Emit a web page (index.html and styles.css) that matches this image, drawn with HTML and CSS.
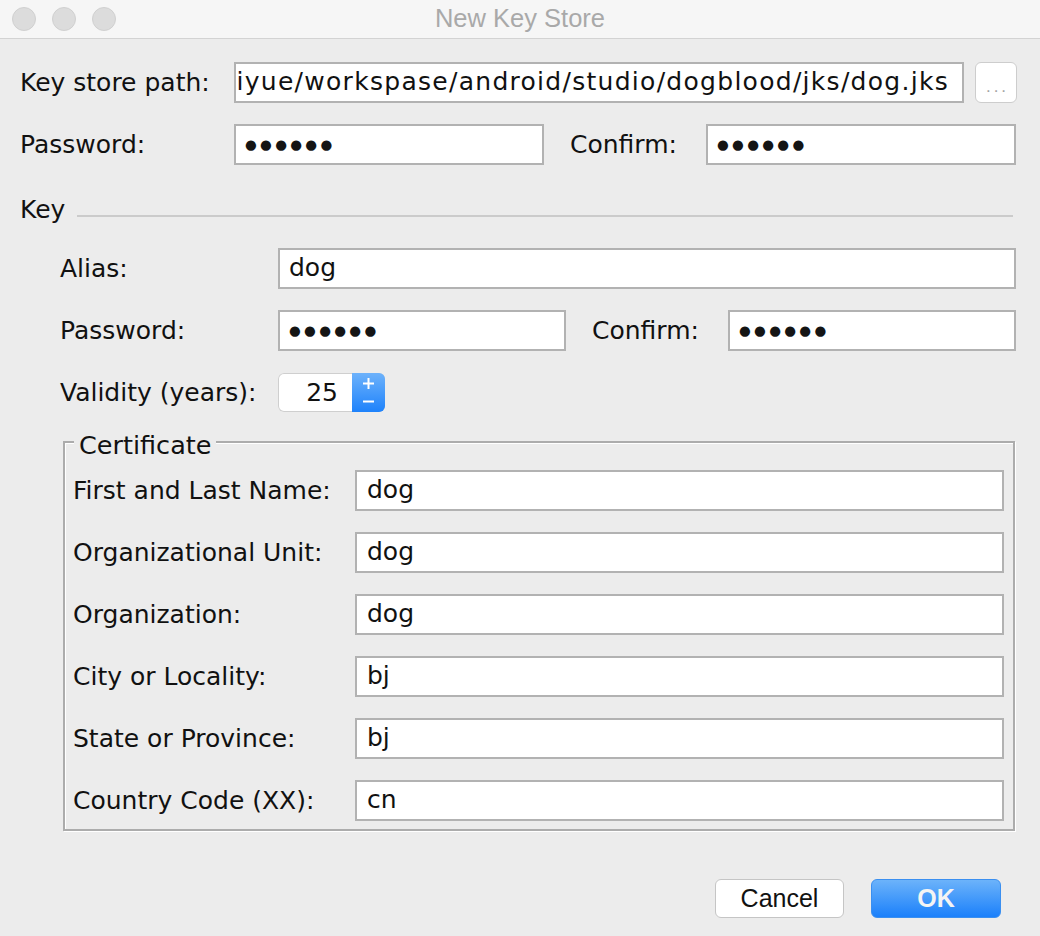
FILE: index.html
```html
<!DOCTYPE html>
<html lang="en">
<head>
<meta charset="utf-8">
<title>New Key Store</title>
<link rel="stylesheet" href="styles.css">
</head>
<body>
<div class="window">
  <header class="titlebar">
    <div class="lights">
      <span class="light"></span>
      <span class="light"></span>
      <span class="light"></span>
    </div>
    <div class="title">New Key Store</div>
  </header>

  <main class="content">
    <section class="store">
      <div class="row">
        <label class="lbl lbl-top">Key store path:</label>
        <div class="field field-path"><span class="path-text">uiyue/workspase/android/studio/dogblood/jks/dog.jks</span></div>
        <button class="browse" type="button"><span class="dots3">...</span></button>
      </div>
      <div class="row">
        <label class="lbl lbl-top">Password:</label>
        <div class="field field-half"><span class="pw">●●●●●●</span></div>
        <label class="lbl lbl-confirm">Confirm:</label>
        <div class="field field-half"><span class="pw">●●●●●●</span></div>
      </div>
    </section>

    <div class="key-head">
      <span class="key-title">Key</span>
      <span class="key-line"></span>
    </div>

    <section class="key">
      <div class="row">
        <label class="lbl lbl-key">Alias:</label>
        <div class="field field-grow"><span class="val">dog</span></div>
      </div>
      <div class="row">
        <label class="lbl lbl-key">Password:</label>
        <div class="field field-keyhalf"><span class="pw">●●●●●●</span></div>
        <label class="lbl lbl-confirm">Confirm:</label>
        <div class="field field-keyhalf"><span class="pw">●●●●●●</span></div>
      </div>
      <div class="row">
        <label class="lbl lbl-key">Validity (years):</label>
        <div class="spinner">
          <span class="spin-val">25</span>
          <span class="spin-btn">
            <svg width="33" height="39" viewBox="0 0 33 39">
              <path d="M11 10.5h11M16.5 5v11" stroke="#fff" stroke-width="2" fill="none"/>
              <path d="M11 28.5h11" stroke="#fff" stroke-width="2" fill="none"/>
            </svg>
          </span>
        </div>
      </div>
    </section>

    <section class="cert">
      <span class="legend">Certificate</span>
      <div class="cert-row">
        <label class="lbl lbl-cert">First and Last Name:</label>
        <div class="field field-cert"><span class="val">dog</span></div>
      </div>
      <div class="cert-row">
        <label class="lbl lbl-cert">Organizational Unit:</label>
        <div class="field field-cert"><span class="val">dog</span></div>
      </div>
      <div class="cert-row">
        <label class="lbl lbl-cert">Organization:</label>
        <div class="field field-cert"><span class="val">dog</span></div>
      </div>
      <div class="cert-row">
        <label class="lbl lbl-cert">City or Locality:</label>
        <div class="field field-cert"><span class="val">bj</span></div>
      </div>
      <div class="cert-row">
        <label class="lbl lbl-cert">State or Province:</label>
        <div class="field field-cert"><span class="val">bj</span></div>
      </div>
      <div class="cert-row">
        <label class="lbl lbl-cert">Country Code (XX):</label>
        <div class="field field-cert"><span class="val">cn</span></div>
      </div>
    </section>

    <footer class="buttons">
      <button class="btn btn-cancel" type="button">Cancel</button>
      <button class="btn btn-ok" type="button">OK</button>
    </footer>
  </main>
</div>
</body>
</html>
```

FILE: styles.css
```css
* { box-sizing: border-box; }

html, body {
  margin: 0;
  padding: 0;
}

body {
  width: 1040px;
  height: 936px;
  background: #ececec;
  font-family: "DejaVu Sans", "Noto Sans", sans-serif;
  color: #111;
  overflow: hidden;
}

.window {
  width: 1040px;
  height: 936px;
  display: flex;
  flex-direction: column;
}

/* Title bar */
.titlebar {
  height: 39px;
  flex: none;
  background: #f6f6f6;
  border-bottom: 1px solid #d3d3d3;
  display: grid;
  grid-template-columns: 1fr;
  align-items: center;
}

.lights {
  grid-area: 1 / 1;
  display: flex;
  gap: 16px;
  padding-left: 12px;
  align-items: center;
}

.light {
  width: 24px;
  height: 24px;
  border-radius: 50%;
  background: #dcdcdc;
  border: 1px solid #d0d0d0;
}

.title {
  grid-area: 1 / 1;
  text-align: center;
  font-family: "Liberation Sans", Arial, sans-serif;
  font-size: 25.5px;
  color: #a9a9a9;
  padding-bottom: 1px;
}

.content {
  flex: 1;
  display: flex;
  flex-direction: column;
}

/* Generic rows */
.row {
  display: flex;
  align-items: center;
  height: 41px;
}

.lbl {
  font-size: 25px;
  white-space: nowrap;
  line-height: 41px;
  flex: none;
}

.field {
  height: 41px;
  background: #fff;
  border: 2px solid #b2b2b2;
  display: flex;
  align-items: center;
  overflow: hidden;
  flex: none;
  font-size: 25px;
  padding-left: 9px;
}

.val {
  white-space: nowrap;
  position: relative;
  top: -1px;
}

.pw {
  font-family: "DejaVu Sans", sans-serif;
  font-size: 13.5px;
  letter-spacing: 3.3px;
  line-height: 1;
  white-space: nowrap;
  color: #141414;
}

/* Key store section */
.store {
  display: flex;
  flex-direction: column;
  gap: 21px;
  padding-top: 23px;
  padding-left: 20px;
}

.lbl-top { width: 214px; }

.field-path {
  width: 730px;
  justify-content: flex-end;
  padding-left: 0;
  padding-right: 13px;
}

.path-text {
  white-space: nowrap;
  letter-spacing: 1.28px;
  position: relative;
  top: -1px;
}

.browse {
  margin-left: 11px;
  width: 42px;
  height: 41px;
  background: #fff;
  border: 1px solid #cdcdcd;
  border-radius: 6px;
  padding: 0 0 7px 3px;
  display: flex;
  align-items: flex-end;
  justify-content: center;
  font-family: "Liberation Sans", Arial, sans-serif;
  font-size: 17px;
  color: #a4a4a4;
  letter-spacing: 3px;
  line-height: 1;
}

.field-half { width: 310px; }

.lbl-confirm {
  width: 136px;
  margin-left: 26px;
}

/* Key separator */
.key-head {
  display: flex;
  align-items: center;
  padding-left: 20px;
  padding-right: 27px;
  margin-top: 31px;
  height: 28px;
}

.key-title {
  font-size: 25px;
  line-height: 28px;
}

.key-line {
  flex: 1;
  height: 2px;
  background: #cbcbcb;
  margin-left: 12px;
  margin-top: 12px;
}

/* Key section */
.key {
  display: flex;
  flex-direction: column;
  gap: 21px;
  padding-left: 60px;
  margin-top: 24px;
}

.lbl-key { width: 218px; }

.field-grow { width: 738px; }

.field-keyhalf { width: 288px; }

.spinner {
  display: flex;
  width: 107px;
  height: 39px;
  border-radius: 6px;
  overflow: hidden;
  box-shadow: 0 0 0 1px #cfcfcf inset;
  background: #fff;
}

.spin-val {
  width: 74px;
  text-align: right;
  padding-right: 14px;
  font-size: 25px;
  line-height: 39px;
}

.spin-btn {
  width: 33px;
  height: 39px;
  background: linear-gradient(#6db2fb, #1e82fb);
  display: block;
}

.spin-btn svg { display: block; }

/* Certificate group */
.cert {
  position: relative;
  margin-top: 28px;
  margin-left: 63px;
  width: 952px;
  border: 2px solid #acacac;
  box-shadow: inset 1px 1px 0 #fff, 1px 1px 0 #fff;
  padding: 27px 9px 8px 8px;
  display: flex;
  flex-direction: column;
  gap: 21px;
}

.legend {
  position: absolute;
  top: -15px;
  left: 9px;
  background: #ececec;
  padding: 0 5px;
  font-size: 25.5px;
  line-height: 34px;
}

.cert-row {
  display: flex;
  align-items: center;
  height: 41px;
}

.lbl-cert { width: 282px; }

.field-cert { width: 649px; padding-left: 10px; }

/* Buttons */
.buttons {
  display: flex;
  justify-content: flex-end;
  gap: 27px;
  padding-right: 39px;
  margin-top: 48px;
}

.btn {
  height: 39px;
  border-radius: 6px;
  font-family: "Liberation Sans", Arial, sans-serif;
  font-size: 25px;
  padding: 0;
  line-height: 37px;
}

.btn-cancel {
  width: 129px;
  background: #fff;
  border: 1px solid #c5c5c5;
  color: #111;
}

.btn-ok {
  width: 130px;
  background: linear-gradient(#6cb3fa, #1b80fb);
  border: 1px solid #3a8ff0;
  color: #f4f4f4;
  font-weight: bold;
}
```
